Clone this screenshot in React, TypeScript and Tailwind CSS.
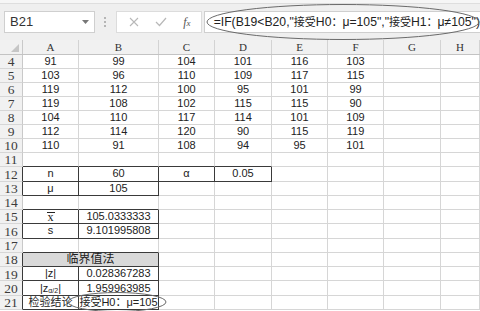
import React from "react";

const COLS = [
  { k: "A", w: "w-[56px]" },
  { k: "B", w: "w-[80px]" },
  { k: "C", w: "w-[56px]" },
  { k: "D", w: "w-[57px]" },
  { k: "E", w: "w-[56px]" },
  { k: "F", w: "w-[56px]" },
  { k: "G", w: "w-[57px]" },
  { k: "H", w: "flex-1" },
];

const DATA: Record<number, React.ReactNode[]> = {
  4: ["91", "99", "104", "101", "116", "103"],
  5: ["103", "96", "110", "109", "117", "115"],
  6: ["119", "112", "100", "95", "101", "99"],
  7: ["119", "108", "102", "115", "115", "90"],
  8: ["104", "110", "117", "114", "101", "109"],
  9: ["112", "114", "120", "90", "115", "119"],
  10: ["110", "91", "108", "94", "95", "101"],
  12: ["n", "60", "α", "0.05"],
  13: ["μ", "105"],
  15: [
    <span
      key="x"
      className="inline-block border-t-[1.5px] border-[#222] px-[1px] leading-[9px] font-['Liberation_Serif',serif] text-[12px]"
    >
      x
    </span>,
    "105.0333333",
  ],
  16: ["s", "9.101995808"],
  19: ["|z|", "0.028367283"],
  20: [
    <span key="z" className="leading-none">
      |z<span className="text-[7px] relative top-[1px] leading-none">α/2</span>|
    </span>,
    "1.959963985",
  ],
  21: ["检验结论", "接受H0：μ=105"],
};

const BOXED = new Set([
  "12-1", "12-2", "12-3", "12-4",
  "13-1", "13-2",
  "15-1", "15-2",
  "16-1", "16-2",
  "18-1", "18-2",
  "19-1", "19-2",
  "20-1", "20-2",
  "21-1", "21-2",
]);
const inBox = (r: number, c: number) => BOXED.has(`${r}-${c}`);

const ROWS = Array.from({ length: 18 }, (_, i) => i + 4);

function Cell({ r, c, w, children }: { r: number; c: number; w: string; children?: React.ReactNode }) {
  const darkR = inBox(r, c) || inBox(r, c + 1);
  const darkB = inBox(r, c) || inBox(r + 1, c);
  return (
    <div
      className={`${w} h-full flex items-center justify-center border-r border-b ${
        darkR ? "border-r-[#3a3a3a]" : "border-r-[#d6d6d6]"
      } ${darkB ? "border-b-[#3a3a3a]" : "border-b-[#d6d6d6]"} overflow-visible whitespace-nowrap leading-none`}
    >
      {children}
    </div>
  );
}

function Row({ r }: { r: number }) {
  const vals = DATA[r] || [];
  const h = r <= 10 ? "h-[14px]" : "h-[14.27px]";
  const hdrDark = inBox(r, 1);
  return (
    <div className={`flex ${h}`}>
      <div
        className={`w-[23px] shrink-0 h-full flex items-center justify-center bg-[#f1f1f1] border-r border-b border-b-[#d6d6d6] ${
          hdrDark ? "border-r-[#3a3a3a]" : "border-r-[#c9c9c9]"
        } font-['Liberation_Serif',serif] text-[13.5px] text-[#3c3c3c] leading-none pt-[1px]`}
      >
        {r}
      </div>
      {r === 18 ? (
        <>
          <div className="w-[136px] h-full flex items-center justify-center bg-[#d9d9d9] border-r border-b border-r-[#3a3a3a] border-b-[#3a3a3a] text-[12px] leading-none">
            临界值法
          </div>
          {COLS.slice(2).map((col, i) => (
            <Cell key={col.k} r={r} c={i + 3} w={col.w} />
          ))}
        </>
      ) : (
        COLS.map((col, i) => (
          <Cell key={col.k} r={r} c={i + 1} w={col.w}>
            {vals[i]}
          </Cell>
        ))
      )}
    </div>
  );
}

export default function App() {
  return (
    <div className="relative w-[480px] h-[311px] overflow-hidden bg-white font-['Liberation_Sans','Noto_Sans_CJK_SC',sans-serif] text-[#222]">
      {/* toolbar */}
      <div className="h-[40px] bg-[#efefef] flex flex-col">
        <div className="h-[4px] bg-[#f6f6f6] border-b border-[#dedede]" />
        <div className="flex items-center h-[22px] mt-[7px]">
          <div className="ml-[4px] w-[92px] h-[22px] bg-white border border-[#cfcfcf] flex items-center justify-between pl-[5px] pr-[5px]">
            <span className="text-[13px] text-[#333]">B21</span>
            <svg width="7" height="4" viewBox="0 0 7 4"><path d="M0 0h7L3.5 4z" fill="#777" /></svg>
          </div>
          <div className="w-[22px] flex flex-col items-center gap-[2px]">
            <span className="w-[2px] h-[2px] bg-[#b5b5b5]" />
            <span className="w-[2px] h-[2px] bg-[#b5b5b5]" />
            <span className="w-[2px] h-[2px] bg-[#b5b5b5]" />
          </div>
          <div className="w-[87px] h-[22px] bg-white border border-[#dcdcdc] flex items-center">
            <svg className="ml-[12px]" width="10" height="10" viewBox="0 0 10 10">
              <path d="M1 1L9 9M9 1L1 9" stroke="#b8b8b8" strokeWidth="1.1" fill="none" />
            </svg>
            <svg className="ml-[16px]" width="12" height="10" viewBox="0 0 12 10">
              <path d="M1 5l3.5 3.5L11 1" stroke="#b8b8b8" strokeWidth="1.2" fill="none" />
            </svg>
            <span className="ml-[16px] font-['Liberation_Serif',serif] italic text-[12px] text-[#555] leading-none">
              f<span className="text-[9px]">x</span>
            </span>
          </div>
          <div className="ml-[2px] flex-1 h-[22px] bg-white border border-[#cfcfcf] border-r-0 flex items-center pl-[9px] whitespace-nowrap text-[12.2px] text-[#222]">
            =IF(B19&lt;B20,"<span className="text-[11px]">接受</span>H0<span className="text-[11px]">：</span>μ=105","<span className="text-[11px]">接受</span>H1<span className="text-[11px]">：</span>μ≠105")
          </div>
        </div>
      </div>

      {/* column headers */}
      <div className="flex h-[15px] bg-[#f1f1f1] border-b border-[#c3c3c3]">
        <div className="w-[23px] h-full border-r border-[#c9c9c9] relative">
          <svg className="absolute right-[3px] bottom-[2px]" width="8" height="8" viewBox="0 0 8 8">
            <path d="M8 0V8H0z" fill="#c6c6c6" />
          </svg>
        </div>
        {COLS.map((col) => (
          <div
            key={col.k}
            className={`${col.w} h-full border-r border-[#d3d3d3] flex items-center justify-center font-['Liberation_Serif',serif] text-[11px] text-[#333]`}
          >
            {col.k}
          </div>
        ))}
      </div>

      {/* grid */}
      <div className="text-[11px]">
        {ROWS.map((r) => (
          <Row key={r} r={r} />
        ))}
      </div>

      {/* annotations */}
      <svg className="absolute left-0 top-0 pointer-events-none" width="480" height="311">
        <ellipse cx="343" cy="22" rx="136" ry="17.5" fill="none" stroke="#6a6a6a" strokeWidth="1" />
        <ellipse cx="117" cy="302" rx="49" ry="9.5" fill="none" stroke="#6a6a6a" strokeWidth="1" />
      </svg>
    </div>
  );
}
